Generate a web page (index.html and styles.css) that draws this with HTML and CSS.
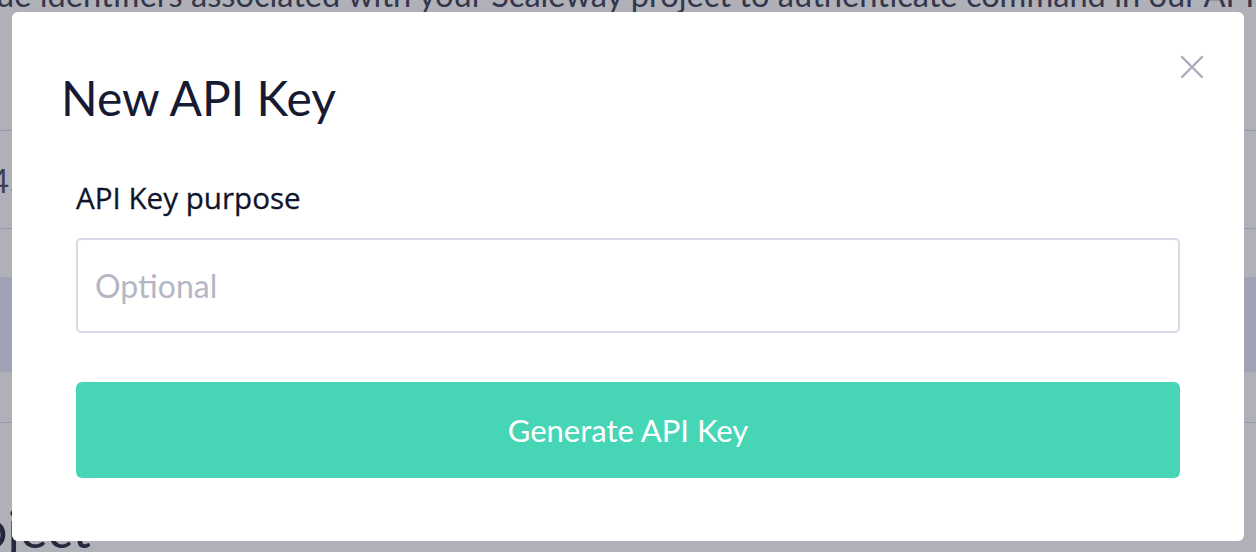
FILE: index.html
```html
<!DOCTYPE html>
<html lang="en">
<head>
<meta charset="utf-8">
<title>New API Key</title>
<link rel="stylesheet" href="styles.css">
</head>
<body>
<div class="page">
  <p class="intro">ue identifiers associated with your Scaleway project to authenticate command in our API.</p>
  <div class="table">
    <div class="row head"></div>
    <div class="row cell"><span class="num">45</span></div>
    <div class="row gap"></div>
    <div class="row selected"></div>
    <div class="row tail"></div>
  </div>
  <h2 class="section">oject</h2>
</div>
<div class="overlay"></div>
<div class="modal" role="dialog" aria-labelledby="modal-title">
  <button class="close" aria-label="Close">
    <svg viewBox="0 0 24 24" width="24" height="24" aria-hidden="true"><path d="M2 2 L22 22 M22 2 L2 22" fill="none" stroke="currentColor" stroke-width="2.4" stroke-linecap="round"/></svg>
  </button>
  <h1 id="modal-title" class="title">New API Key</h1>
  <form class="form">
    <label class="label" for="purpose">API Key purpose</label>
    <input id="purpose" class="input" type="text" placeholder="Optional">
    <button type="button" class="submit">Generate API Key</button>
  </form>
</div>
</body>
</html>
```
FILE: styles.css
```css
* { box-sizing: border-box; }
html, body { margin: 0; padding: 0; }
body {
  width: 1256px;
  height: 552px;
  overflow: hidden;
  background: #ffffff;
  font-family: Lato, "Open Sans", sans-serif;
  color: #3b3e53;
  position: relative;
}
.page {
  margin-left: -4px;
}
.intro {
  margin: -25px 0 0 0;
  font-size: 32.6px;
  line-height: 40px;
  color: #3b3e53;
  white-space: nowrap;
}
.row { border-bottom: 1px solid #d4d6e2; }
.head { height: 116px; }
.cell {
  height: 98px;
  display: flex;
  align-items: center;
  font-size: 33px;
  color: #4a4d60;
}
.num { margin-left: -6px; }
.gap { height: 48px; border-bottom: none; }
.selected { height: 95px; background: #e2e7f9; border-bottom: none; }
.tail { height: 51px; }
.section {
  margin: 75px 0 0 -18px;
  font-size: 52px;
  font-weight: 400;
  line-height: 60px;
  color: #25283d;
  white-space: nowrap;
}
.overlay {
  position: absolute;
  inset: 0;
  background: rgba(42, 44, 62, 0.37);
}
.modal {
  position: absolute;
  left: 12px;
  top: 12px;
  width: 1232px;
  height: 529px;
  background: #ffffff;
  border-radius: 6px;
  padding: 0 64px;
}
.close {
  position: absolute;
  right: 40px;
  top: 43px;
  width: 24px;
  height: 24px;
  padding: 0;
  border: 0;
  background: none;
  color: #a9acbc;
  cursor: pointer;
}
.close svg { display: block; }
.title {
  margin: 58px 0 0 -15px;
  font-size: 48px;
  line-height: 56px;
  font-weight: 400;
  color: #161a33;
}
.form {
  display: flex;
  flex-direction: column;
  margin-top: 56px;
}
.label {
  font-family: "Open Sans", Lato, sans-serif;
  font-weight: 400;
  font-size: 29.6px;
  line-height: 32px;
  color: #11152c;
  -webkit-text-stroke: 0.3px #11152c;
}
.input {
  margin-top: 24px;
  height: 95px;
  border: 2px solid #d8dae8;
  border-radius: 5px;
  padding: 0 17px;
  font-family: inherit;
  font-size: 32px;
  color: #161a33;
  outline: none;
}
.input::placeholder { color: #b4b7c6; }
.submit {
  margin-top: 49px;
  height: 96px;
  border: 0;
  border-radius: 6px;
  background: #46d6b6;
  color: #ffffff;
  font-family: inherit;
  font-size: 31px;
  cursor: pointer;
}
```
